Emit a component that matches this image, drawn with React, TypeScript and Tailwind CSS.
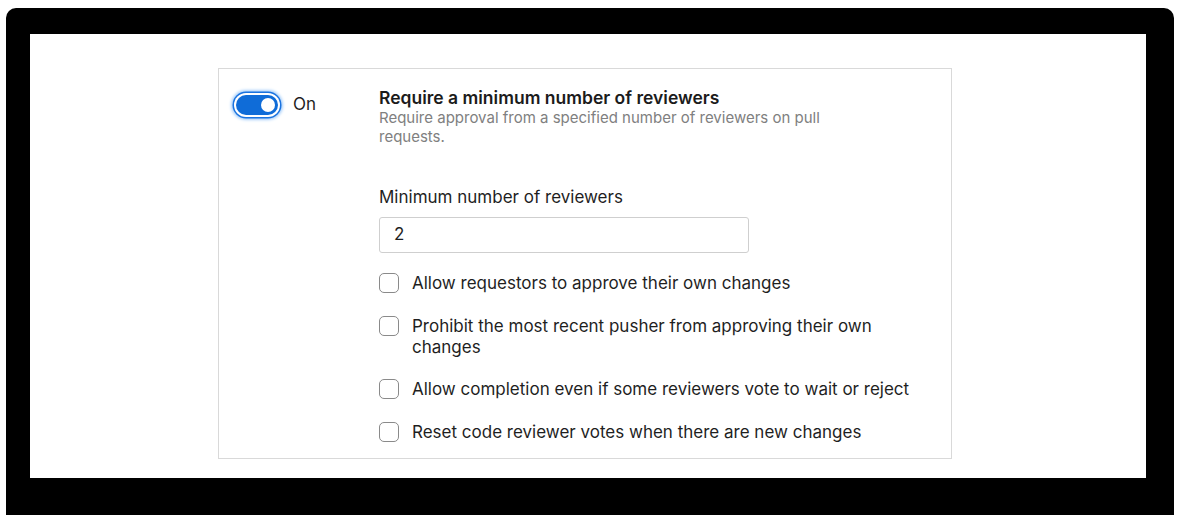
import React from "react";

const options = [
  "Allow requestors to approve their own changes",
  "Prohibit the most recent pusher from approving their own changes",
  "Allow completion even if some reviewers vote to wait or reject",
  "Reset code reviewer votes when there are new changes",
];

const Toggle = () => (
  <div className="flex items-center">
    <div className="relative w-[42px] h-[20px] rounded-full bg-[#0f6cd8] shadow-[0_0_0_2px_#ffffff,0_0_0_3.5px_#1a73e0,0_0_3px_5px_#a9d0fa]">
      <span className="absolute right-[3px] top-[3px] w-[14px] h-[14px] rounded-full bg-white" />
    </div>
    <span className="ml-[15px] text-[17px] text-[#1f1f1f]">On</span>
  </div>
);

export default function App() {
  return (
    <div
      className="w-[1185px] h-[520px] bg-white pt-[8px] pl-[6px] pr-[11px]"
      style={{ fontFamily: "Inter, 'Noto Sans', sans-serif" }}
    >
      <div className="bg-black rounded-t-[10px] pt-[26px] pl-[24px] pr-[28px] pb-[37px]">
        <div className="bg-white h-[444px] pt-[34px] pl-[188px]">
          <div className="w-[734px] h-[391px] border border-[#d9d9d9] flex pl-[15px] pt-[19px]">
            <div className="w-[145px] shrink-0 pt-[4px] pl-[2px]">
              <Toggle />
            </div>
            <div className="flex-1 pr-[20px]">
              <div className="text-[17.5px] font-semibold text-[#1b1b1b] leading-[20px]">
                Require a minimum number of reviewers
              </div>
              <div className="max-w-[460px] text-[15px] text-[#808080] leading-[19px]">
                Require approval from a specified number of reviewers on pull requests.
              </div>
              <div className="mt-[40px] text-[17px] text-[#1f1f1f] leading-[22px]">
                Minimum number of reviewers
              </div>
              <div className="mt-[9px] w-[370px] h-[36px] border border-[#cfcfcf] rounded-[3px] flex items-center px-[14px] text-[17px] text-[#1f1f1f]">
                2
              </div>
              <div className="mt-[20px] flex flex-col gap-[21.5px]">
                {options.map((o) => (
                  <label key={o} className="flex items-start gap-[13px] text-[17px] text-[#1f1f1f] leading-[21px]">
                    <span className="w-[20px] h-[20px] shrink-0 rounded-[5px] border border-[#8a8a8a] bg-white" />
                    <span className="max-w-[515px]">{o}</span>
                  </label>
                ))}
              </div>
            </div>
          </div>
        </div>
      </div>
    </div>
  );
}
